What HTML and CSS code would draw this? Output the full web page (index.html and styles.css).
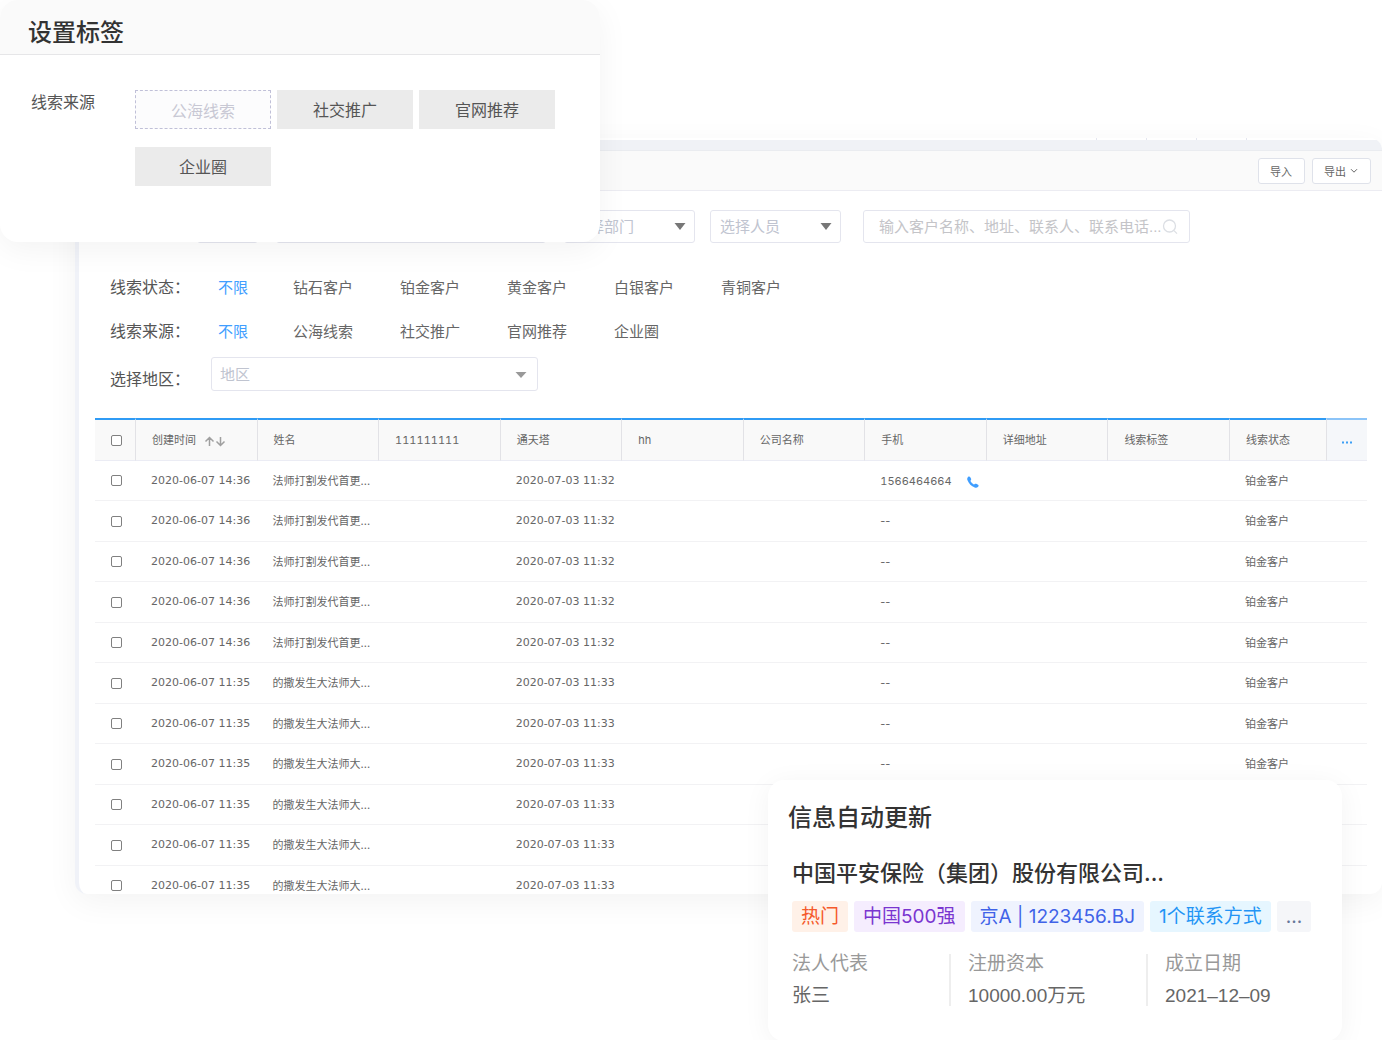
FILE: index.html
```html
<!DOCTYPE html>
<html lang="zh-CN">
<head>
<meta charset="utf-8">
<meta name="viewport" content="width=device-width, initial-scale=1">
<title>线索管理</title>
<link rel="stylesheet" href="styles.css">
</head>
<body>
<div class="stage">
  <main class="panel">
    <div class="tabs"><span></span><span></span><span></span><span></span></div>
    <div class="toolbar">
      <button class="btn" type="button">导入</button>
      <button class="btn" type="button">导出
        <svg width="8" height="6" viewBox="0 0 8 6" aria-hidden="true"><path d="M1 1.2 4 4.2 7 1.2" fill="none" stroke="#666" stroke-width="1"/></svg>
      </button>
    </div>
    <form class="filters">
      <div class="search-row">
        <button class="field scope" type="button" aria-label="范围"></button>
        <input class="field period" type="text" aria-label="时间">
        <span class="picker"><select class="field" aria-label="选择部门"><option>选择部门</option></select><svg width="12" height="7" viewBox="0 0 12 7" aria-hidden="true"><path d="M.5 0h11L6 7z" fill="#777"/></svg></span>
        <span class="picker"><select class="field" aria-label="选择人员"><option>选择人员</option></select><svg width="12" height="7" viewBox="0 0 12 7" aria-hidden="true"><path d="M.5 0h11L6 7z" fill="#777"/></svg></span>
        <span class="search">
          <input class="field" type="text" aria-label="搜索" placeholder="输入客户名称、地址、联系人、联系电话...">
          <svg width="18" height="18" viewBox="0 0 18 18" aria-hidden="true"><circle cx="8.5" cy="8" r="6" fill="none" stroke="#dcdfe4" stroke-width="1.3"/><path d="m13 12.6 3 3" stroke="#dcdfe4" stroke-width="1.3"/></svg>
        </span>
      </div>
      <div class="filter-row">
        <span class="name">线索状态：</span>
        <a class="on" href="#">不限</a><a href="#">钻石客户</a><a href="#">铂金客户</a><a href="#">黄金客户</a><a href="#">白银客户</a><a href="#">青铜客户</a>
      </div>
      <div class="filter-row">
        <span class="name">线索来源：</span>
        <a class="on" href="#">不限</a><a href="#">公海线索</a><a href="#">社交推广</a><a href="#">官网推荐</a><a href="#">企业圈</a>
      </div>
      <div class="filter-row region">
        <label class="name" for="region">选择地区：</label>
        <span class="picker wide"><select class="field" id="region"><option>地区</option></select><svg width="12" height="6" viewBox="0 0 12 6" aria-hidden="true"><path d="M.5 0h11L6 6z" fill="#999"/></svg></span>
      </div>
    </form>
    <div class="table-wrap">
      <table>
        <colgroup><col class="c-check"><col span="9"><col class="c-state"><col class="c-more"></colgroup>
        <thead>
          <tr>
            <th><input type="checkbox" aria-label="全选"></th>
            <th>创建时间<svg class="sort" width="22" height="11" viewBox="0 0 22 11" aria-hidden="true"><path d="M5.500 10V1.500M1.500 5.500l4-4 4 4M16.500 1v8.500M12.500 5.500l4 4 4-4" fill="none" stroke="#a0a0a0" stroke-width="1.5"/></svg></th>
            <th>姓名</th><th>111111111</th><th>通天塔</th><th>hh</th><th>公司名称</th><th>手机</th><th>详细地址</th><th>线索标签</th><th>线索状态</th>
            <th class="more"><button type="button" aria-label="更多列"><svg width="12" height="3" viewBox="0 0 12 3" aria-hidden="true"><path d="M1 .5h2v2H1zM5 .5h2v2H5zM9 .5h2v2H9z" fill="#3c9ff5"/></svg></button></th>
          </tr>
        </thead>
        <tbody>
          <tr><td><input type="checkbox" aria-label="选择第1行"></td><td>2020-06-07 14:36</td><td>法师打割发代首更...</td><td></td><td>2020-07-03 11:32</td><td></td><td></td><td><span class="number">1566464664</span><svg class="phone" width="12" height="12" viewBox="0 0 12 12" aria-hidden="true"><path d="M1 .9C1.800.2 2.700.300 3.100 1l1 1.700c.3.600.1 1-.3 1.500-.4.400-.4.700-.1 1.200.7 1.200 1.600 2.100 2.800 2.800.5.300.8.300 1.200-.1.500-.4.900-.600 1.500-.3l1.900 1c.7.500.7 1.300 0 2C10.100 11.800 9 12 7.700 11.500 4.400 10.300 1.700 7.600.5 4.300 0 3 .2 1.800 1 .9z" fill="#409eff"/></svg></td><td></td><td></td><td>铂金客户</td><td></td></tr>
          <tr><td><input type="checkbox" aria-label="选择第2行"></td><td>2020-06-07 14:36</td><td>法师打割发代首更...</td><td></td><td>2020-07-03 11:32</td><td></td><td></td><td>--</td><td></td><td></td><td>铂金客户</td><td></td></tr>
          <tr><td><input type="checkbox" aria-label="选择第3行"></td><td>2020-06-07 14:36</td><td>法师打割发代首更...</td><td></td><td>2020-07-03 11:32</td><td></td><td></td><td>--</td><td></td><td></td><td>铂金客户</td><td></td></tr>
          <tr><td><input type="checkbox" aria-label="选择第4行"></td><td>2020-06-07 14:36</td><td>法师打割发代首更...</td><td></td><td>2020-07-03 11:32</td><td></td><td></td><td>--</td><td></td><td></td><td>铂金客户</td><td></td></tr>
          <tr><td><input type="checkbox" aria-label="选择第5行"></td><td>2020-06-07 14:36</td><td>法师打割发代首更...</td><td></td><td>2020-07-03 11:32</td><td></td><td></td><td>--</td><td></td><td></td><td>铂金客户</td><td></td></tr>
          <tr><td><input type="checkbox" aria-label="选择第6行"></td><td>2020-06-07 11:35</td><td>的撒发生大法师大...</td><td></td><td>2020-07-03 11:33</td><td></td><td></td><td>--</td><td></td><td></td><td>铂金客户</td><td></td></tr>
          <tr><td><input type="checkbox" aria-label="选择第7行"></td><td>2020-06-07 11:35</td><td>的撒发生大法师大...</td><td></td><td>2020-07-03 11:33</td><td></td><td></td><td>--</td><td></td><td></td><td>铂金客户</td><td></td></tr>
          <tr><td><input type="checkbox" aria-label="选择第8行"></td><td>2020-06-07 11:35</td><td>的撒发生大法师大...</td><td></td><td>2020-07-03 11:33</td><td></td><td></td><td>--</td><td></td><td></td><td>铂金客户</td><td></td></tr>
          <tr><td><input type="checkbox" aria-label="选择第9行"></td><td>2020-06-07 11:35</td><td>的撒发生大法师大...</td><td></td><td>2020-07-03 11:33</td><td></td><td></td><td></td><td></td><td></td><td></td><td></td></tr>
          <tr><td><input type="checkbox" aria-label="选择第10行"></td><td>2020-06-07 11:35</td><td>的撒发生大法师大...</td><td></td><td>2020-07-03 11:33</td><td></td><td></td><td></td><td></td><td></td><td></td><td></td></tr>
          <tr><td><input type="checkbox" aria-label="选择第11行"></td><td>2020-06-07 11:35</td><td>的撒发生大法师大...</td><td></td><td>2020-07-03 11:33</td><td></td><td></td><td></td><td></td><td></td><td></td><td></td></tr>
        </tbody>
      </table>
    </div>
  </main>

  <section class="dialog">
    <h2>设置标签</h2>
    <div class="dialog-body">
      <span class="dialog-label">线索来源</span>
      <div class="choices">
        <button class="empty" type="button">公海线索</button>
        <button type="button">社交推广</button>
        <button type="button">官网推荐</button>
        <button type="button">企业圈</button>
      </div>
    </div>
  </section>

  <section class="card">
    <h2>信息自动更新</h2>
    <div class="card-body">
      <h3>中国平安保险（集团）股份有限公司...</h3>
      <div class="tags">
        <span class="tag hot">热门</span><span class="tag top">中国500强</span><span class="tag stock">京A | 1223456.BJ</span><span class="tag contact">1个联系方式</span><span class="tag rest">...</span>
      </div>
      <dl class="facts">
        <div><dt>法人代表</dt><dd>张三</dd></div>
        <div><dt>注册资本</dt><dd>10000.00万元</dd></div>
        <div><dt>成立日期</dt><dd>2021–12–09</dd></div>
      </dl>
    </div>
  </section>
</div>
</body>
</html>
```
FILE: styles.css
```css
* { box-sizing: border-box; }

body {
  margin: 0;
  background: #fff;
  color: #666;
  font-family: "Liberation Sans", "Noto Sans CJK SC", sans-serif;
  font-size: 15px;
}

button, input, select { font: inherit; color: inherit; margin: 0; }
button { padding: 0; cursor: pointer; }
a { color: inherit; text-decoration: none; }
h2, h3, dl, dd { margin: 0; }
svg { flex: none; }

.stage { position: relative; padding: 138px 0 146px 75px; }

/* List panel */
.panel {
  border-left: 4px solid #f0f2f8;
  border-radius: 0 12px 12px 12px;
  background: #fff;
  box-shadow: 0 8px 32px rgba(0, 0, 0, .05);
  overflow: hidden;
}
.tabs {
  display: flex;
  justify-content: flex-end;
  gap: 49px;
  height: 12px;
  padding-right: 135px;
  border-bottom: 10px solid #f0f2f6;
}
.tabs span { width: 1px; background: #e4e6f0; }
.toolbar {
  display: flex;
  justify-content: flex-end;
  align-items: center;
  gap: 7px;
  height: 41px;
  padding-right: 11px;
  border-top: 1px solid #eaecf0;
  border-bottom: 1px solid #ececf2;
  background: #fafafa;
}
.btn {
  display: flex;
  align-items: center;
  gap: 4px;
  height: 26px;
  padding: 0 12px 0 11px;
  border: 1px solid #dfe2ea;
  border-radius: 3px;
  background: #fff;
  font-size: 11px;
}

/* Filters */
.filters { padding: 19px 0 27px 31px; }
.field {
  height: 33px;
  border: 1px solid #e4e5ee;
  border-radius: 3px;
  background: #fff;
}
.search-row { display: flex; padding-left: 87px; }
.scope { width: 61px; }
.period { width: 270px; margin: 0 18px; }
.picker { position: relative; width: 131px; margin-right: 15px; }
.picker .field {
  width: 100%;
  padding: 0 9px;
  appearance: none;
  color: #c0c4d0;
}
.picker svg { position: absolute; right: 9px; top: 13px; }
.search { position: relative; width: 327px; margin-left: 7px; }
.search .field { width: 100%; padding: 0 26px 0 15px; }
.search ::placeholder { color: #c4c4c8; opacity: 1; }
.search svg { position: absolute; right: 11px; top: 8px; }

.filter-row { display: flex; align-items: center; height: 44px; }
.search-row + .filter-row { margin-top: 21px; }
.name { width: 108px; color: #555; font-size: 16px; }
.filter-row a { width: 107px; }
.filter-row .on { width: 75px; color: #409eff; }
.region { margin-top: 5px; height: 34px; }
.region .name { width: 101px; padding-top: 7px; }
.wide { width: 327px; }
.wide svg { right: 11px; top: 15px; }
.region .field { height: 34px; padding: 0 8px; }

/* Leads table: the wrapper cuts off the rows that do not fit */
.table-wrap { max-height: 476px; margin: 0 15px 0 16px; overflow: hidden; }
table {
  width: 100%;
  table-layout: fixed;
  border-collapse: separate;
  border-spacing: 0;
  font-family: Inter, "Noto Sans CJK SC", sans-serif;
  font-size: 11px;
}
th, .number { font-variant-numeric: tabular-nums; }
td:nth-child(2), td:nth-child(5) { font-family: "DejaVu Sans", sans-serif; }
.c-check { width: 40px; }
.c-more { width: 41px; }
.c-state { width: 97px; }
th, td { padding: 0 0 0 16px; text-align: left; font-weight: 400; white-space: nowrap; line-height: 16px; }
th {
  height: 43px;
  border-top: 2px solid #2f9bf5;
  border-bottom: 1px solid #ebecf4;
  border-left: 1px solid #e2e2e6;
  background: #f9f9f9;
}
th:first-child { border-left: 0; }
td { height: 40px; border-bottom: 1px solid #f2f2f4; }
tr:nth-child(even) td { height: 41px; }
th.more { padding: 0; border-top: 2px solid #8cc4f8; background: #f5f7fa; text-align: center; }
.more button { width: 100%; height: 38px; border: 0; background: none; }
input[type="checkbox"] {
  display: block;
  width: 11px;
  height: 11px;
  appearance: none;
  border: 1px solid #808080;
  border-radius: 2px;
  background: #fff;
}
.sort { margin-left: 8px; vertical-align: -3px; }
.phone { margin-left: 15px; vertical-align: -3px; }

/* Tag dialog, floats over the panel */
.dialog {
  position: absolute;
  top: 0;
  left: 0;
  width: 600px;
  border-radius: 18px;
  background: #fff;
  box-shadow: 0 8px 32px rgba(0, 0, 0, .05);
  overflow: hidden;
}
.dialog h2 {
  padding: 15px 28px 3px;
  border-bottom: 1px solid #e6e6e8;
  background: #fafafa;
  color: #333;
  font-size: 24px;
  font-weight: 500;
  line-height: 36px;
}
.dialog-body { display: flex; padding: 35px 31px 56px; color: #555; font-size: 16px; }
.dialog-label { width: 104px; line-height: 26px; }
.choices { display: grid; grid-template-columns: repeat(3, 136px); gap: 18px 6px; }
.choices button { height: 39px; padding-bottom: 2px; border: 0; background: #ebebeb; }
.choices .empty { padding: 0; border: 1px dashed #c0c0d8; background: #fcfcfd; color: #c8c8d4; }

/* Company card, floats over the panel */
.card {
  position: absolute;
  top: 780px;
  right: 40px;
  width: 574px;
  padding: 20px 20px 35px;
  border-radius: 16px;
  background: #fff;
  box-shadow: 0 4px 28px rgba(0, 0, 0, .05);
}
.card h2 { color: #333; font-size: 24px; font-weight: 500; line-height: 36px; }
.card-body { padding: 20px 4px 0; font-size: 19px; }
.card h3, .tags { font-family: Inter, "Noto Sans CJK SC", sans-serif; }
.card h3 { color: #333; font-size: 22px; font-weight: 500; line-height: 34px; }
.tags { display: flex; gap: 6px; margin-top: 11px; }
.tag { padding: 0 9px; border-radius: 3px; line-height: 31px; white-space: nowrap; }
.hot { background: #fff1e8; color: #f5592a; }
.top { background: #f5edfe; color: #7a35d0; }
.stock { background: #eff3fe; color: #4063e8; }
.contact { background: #e6f6ff; color: #2294f5; }
.rest { background: #f5f6f9; color: #667799; }
.facts { display: grid; grid-template-columns: 157px 197px 1fr; margin-top: 22px; line-height: 20px; }
.facts div + div { padding-left: 17px; border-left: 2px solid #eee; }
.facts dt { margin: 0 0 12px; color: #999; }
```
